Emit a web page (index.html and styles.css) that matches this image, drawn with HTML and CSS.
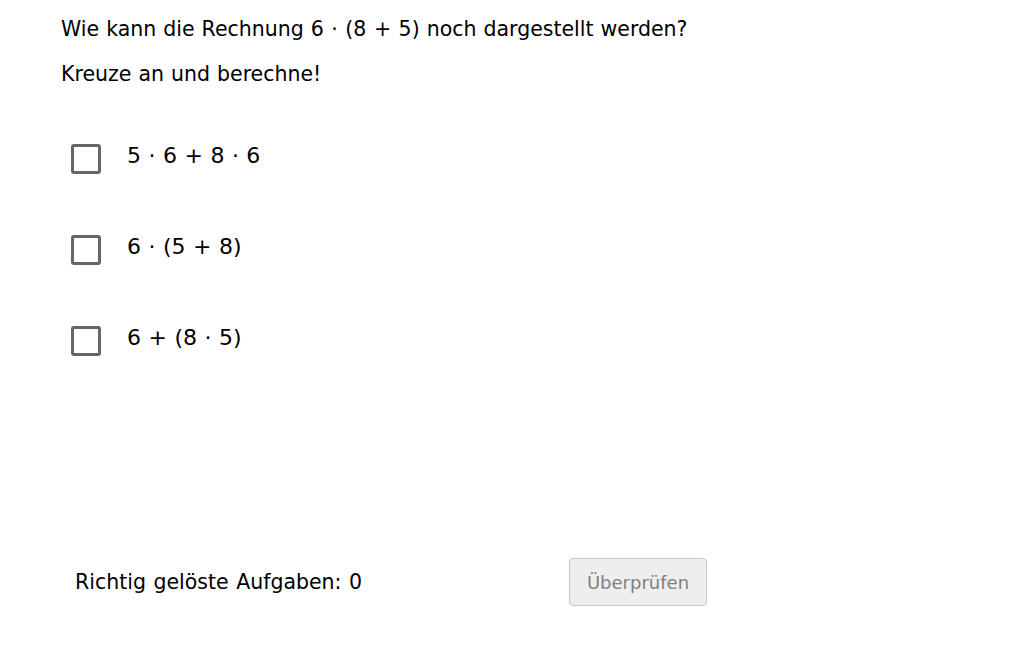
FILE: index.html
```html
<!DOCTYPE html>
<html lang="de">
<head>
    <meta charset="UTF-8">
    <meta name="viewport" content="width=device-width, initial-scale=1.0">
    <title>Distributivgesetz</title>
    <link rel="stylesheet" href="styles.css">
</head>
<body>
    <div class="applet">
        <p class="prompt">Wie kann die Rechnung <span class="math">6 &middot; (8 + 5)</span> noch dargestellt werden?</p>
        <p class="prompt second">Kreuze an und berechne!</p>

        <!-- Antwortmöglichkeiten -->
        <div class="choices">
            <label class="choice">
                <span class="box"></span>
                <span class="term">5 &middot; 6 + 8 &middot; 6</span>
            </label>
            <label class="choice">
                <span class="box"></span>
                <span class="term">6 &middot; (5 + 8)</span>
            </label>
            <label class="choice">
                <span class="box"></span>
                <span class="term">6 + (8 &middot; 5)</span>
            </label>
        </div>

        <div class="footer">
            <span class="score">Richtig gelöste Aufgaben: 0</span>
            <button class="check" disabled>Überprüfen</button>
        </div>
    </div>
</body>
</html>
```

FILE: styles.css
```css
body {
    font-family: "DejaVu Sans", sans-serif;
    margin: 0;
    background-color: #ffffff;
    color: #000000;
}
.applet {
    width: 1032px;
    height: 645px;
    padding: 17px 0 0 61px;
    box-sizing: border-box;
}
.prompt {
    margin: 0;
    font-size: 20.5px;
    line-height: 24px;
    word-spacing: 0.5px;
}
.prompt.second {
    margin-top: 21px;
}
.math {
    word-spacing: 1px;
}
.choices {
    display: flex;
    flex-direction: column;
    gap: 61px;
    margin: 58px 0 0 10px;
}
.choice {
    display: flex;
    align-items: center;
    gap: 26px;
    height: 30px;
}
.box {
    width: 30px;
    height: 30px;
    box-sizing: border-box;
    border: 3px solid #666666;
    border-radius: 3px;
}
.term {
    font-size: 22px;
    line-height: 24px;
    margin-top: -6px;
    word-spacing: 0.5px;
    white-space: pre;
}
.footer {
    display: flex;
    align-items: center;
    margin: 202px 0 0 14px;
}
.score {
    width: 494px;
    font-size: 20.5px;
    word-spacing: 1px;
}
.check {
    width: 138px;
    height: 48px;
    font-family: "DejaVu Sans", sans-serif;
    font-size: 18px;
    color: #808080;
    background-color: #eeeeee;
    border: 1px solid #c8c8c8;
    border-radius: 4px;
}
```
